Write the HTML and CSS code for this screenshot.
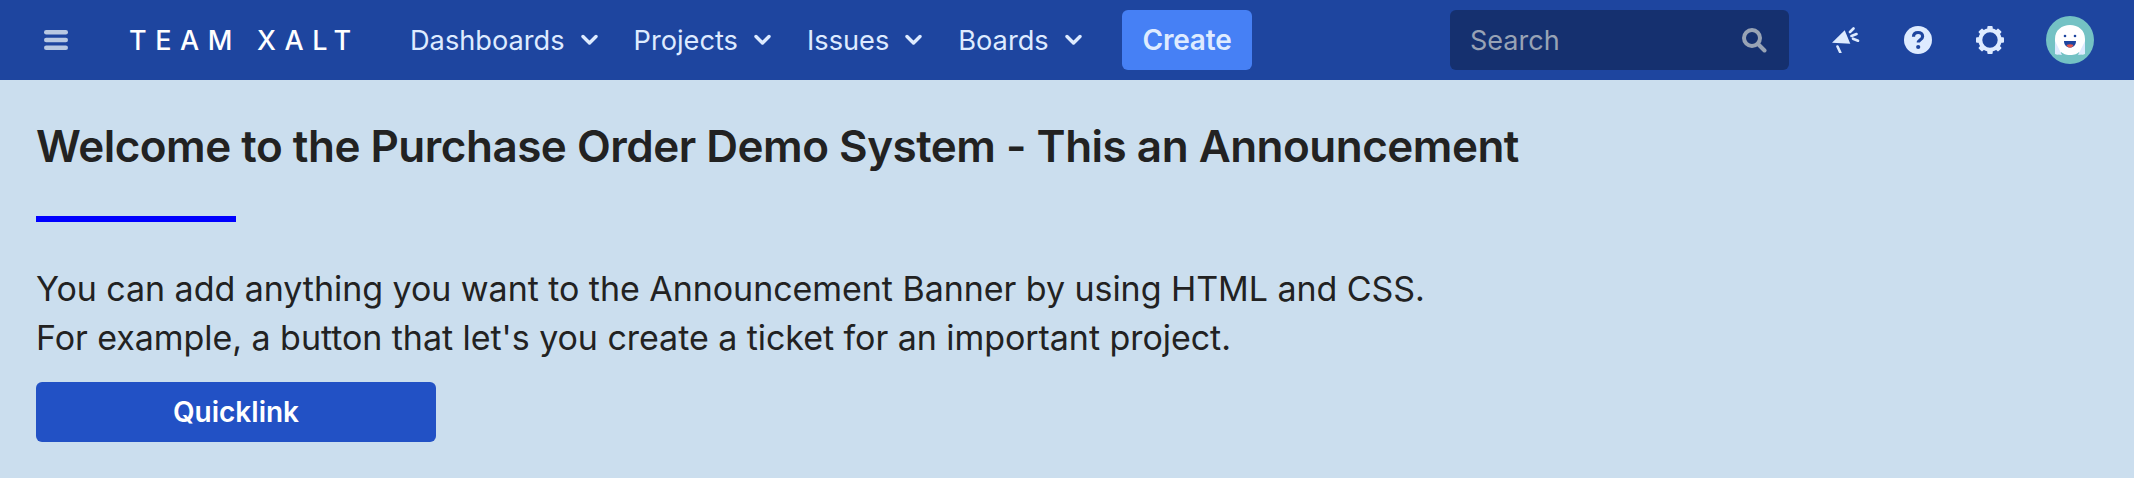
FILE: index.html
```html
<!DOCTYPE html>
<html lang="en">
<head>
<meta charset="utf-8">
<title>Team Xalt</title>
<link rel="stylesheet" href="styles.css">
</head>
<body>
<nav class="nav">
  <svg class="burger" width="24" height="20" viewBox="0 0 24 20"><g fill="#b9c9e2"><rect y="0" width="24" height="4.4" rx="2.2"/><rect y="7.8" width="24" height="4.4" rx="2.2"/><rect y="15.6" width="24" height="4.4" rx="2.2"/></g></svg>
  <span class="logo">TEAM XALT</span>
  <ul class="menu">
    <li class="menu-item"><span>Dashboards</span><svg class="chev" width="17" height="12" viewBox="0 0 17 12"><path d="M2 2.500l6.500 6.500L15 2.500" fill="none" stroke="#deebff" stroke-width="3.400" stroke-linecap="round" stroke-linejoin="round"/></svg></li>
    <li class="menu-item"><span>Projects</span><svg class="chev" width="17" height="12" viewBox="0 0 17 12"><path d="M2 2.500l6.500 6.500L15 2.500" fill="none" stroke="#deebff" stroke-width="3.400" stroke-linecap="round" stroke-linejoin="round"/></svg></li>
    <li class="menu-item"><span>Issues</span><svg class="chev" width="17" height="12" viewBox="0 0 17 12"><path d="M2 2.500l6.500 6.500L15 2.500" fill="none" stroke="#deebff" stroke-width="3.400" stroke-linecap="round" stroke-linejoin="round"/></svg></li>
    <li class="menu-item"><span>Boards</span><svg class="chev" width="17" height="12" viewBox="0 0 17 12"><path d="M2 2.500l6.500 6.500L15 2.500" fill="none" stroke="#deebff" stroke-width="3.400" stroke-linecap="round" stroke-linejoin="round"/></svg></li>
  </ul>
  <a class="create">Create</a>
  <div class="search">
    <span class="search-text">Search</span>
    <svg width="26" height="26" viewBox="0 0 26 26"><circle cx="11" cy="11" r="8" fill="none" stroke="#98a3b5" stroke-width="4"/><path d="M17 17l6.500 6.500" stroke="#98a3b5" stroke-width="4" stroke-linecap="round"/></svg>
  </div>
  <svg class="ic-mega" width="28" height="26" viewBox="0 0 28 26"><path d="M0 15.700L12.700 3.300l5.600 13.400z" fill="#deebff"/><g fill="none" stroke="#deebff" stroke-width="2.600" stroke-linecap="round"><path d="M5.500 19.500l2.800 6M18 5l3.500-3.500M19.500 9l5-2M21 11.700l5 2"/></g></svg>
  <svg class="ic-help" width="28" height="28" viewBox="0 0 28 28"><circle cx="14" cy="14" r="14" fill="#deebff"/><path d="M9.500 10.800c0-2.800 2-4.300 4.600-4.300s4.500 1.500 4.500 3.900c0 3.200-4.300 3.300-4.300 6.100" fill="none" stroke="#1e459f" stroke-width="3.200"/><circle cx="14.200" cy="21" r="2.100" fill="#1e459f"/></svg>
  <svg class="ic-gear" width="28" height="28" viewBox="0 0 28 28"><circle cx="14" cy="14" r="9.700" fill="none" stroke="#deebff" stroke-width="4"/><g fill="#deebff"><rect x="11.300" y="0" width="5.400" height="4.500" rx="1"/><rect x="11.300" y="0" width="5.400" height="4.500" rx="1" transform="rotate(45 14 14)"/><rect x="11.300" y="0" width="5.400" height="4.500" rx="1" transform="rotate(90 14 14)"/><rect x="11.300" y="0" width="5.400" height="4.500" rx="1" transform="rotate(135 14 14)"/><rect x="11.300" y="0" width="5.400" height="4.500" rx="1" transform="rotate(180 14 14)"/><rect x="11.300" y="0" width="5.400" height="4.500" rx="1" transform="rotate(225 14 14)"/><rect x="11.300" y="0" width="5.400" height="4.500" rx="1" transform="rotate(270 14 14)"/><rect x="11.300" y="0" width="5.400" height="4.500" rx="1" transform="rotate(315 14 14)"/></g></svg>
  <svg class="avatar" width="48" height="48" viewBox="0 0 48 48"><circle cx="24" cy="24" r="24" fill="#74c2c4"/><path d="M9 38V23C9 14 16 9 24 9s15 5 15 14v15c-3 1-5 0-6-2-2 2-4 3-9 3s-6-1-9-3c-1 2-3 3-6 2z" fill="#fff"/><path d="M9 25l7 14c-3 0-4-1-7-1zM39 25l-7 14c3 0 4-1 7-1z" fill="#deebff"/><circle cx="19" cy="20" r="1.300" fill="#1e459f"/><circle cx="29" cy="20" r="1.300" fill="#1e459f"/><path d="M18 25h12c0 4-2.500 6.500-6 6.500S18 29 18 25z" fill="#1e459f"/><path d="M20.500 29c2-1 5-1 7 0-1 2-2 2.500-3.500 2.500s-2.500-.5-3.500-2.500z" fill="#e5574d"/></svg>
</nav>
<main class="banner">
  <h1 class="title">Welcome to the Purchase Order Demo System - This an Announcement</h1>
  <div class="rule"></div>
  <p class="text">You can add anything you want to the Announcement Banner by using HTML and CSS.<br>For example, a button that let's you create a ticket for an important project.</p>
  <a class="quick">Quicklink</a>
</main>
</body>
</html>
```
FILE: styles.css
```css
* { box-sizing: border-box; }
html, body { margin: 0; padding: 0; }
body { background: #cbdeee; font-family: Inter, "Liberation Sans", sans-serif; color: #222; height: 478px; overflow: hidden; }
.nav { display: flex; align-items: center; height: 80px; background: #1e459f; padding-left: 44px; color: #deebff; }
.burger { flex: none; }
.logo { flex: none; width: 281px; margin-left: 61px; font-size: 27px; font-weight: 500; letter-spacing: 8.6px; color: #fff; white-space: nowrap; }
.menu { display: flex; list-style: none; margin: 0; padding: 0; flex: none; width: 712px; }
.menu-item { display: flex; align-items: center; font-size: 27.2px; gap: 16px; margin-right: 36px; }
.chev { flex: none; }
.create { flex: none; display: flex; align-items: center; justify-content: center; width: 130px; height: 60px; background: #4680f5; border-radius: 6px; font-size: 28px; font-weight: 600; letter-spacing: -0.2px; color: #deebff; }
.search { flex: none; display: flex; align-items: center; justify-content: space-between; width: 339px; height: 60px; margin-left: 198px; padding: 0 22px 0 20px; background: #15306f; border-radius: 6px; font-size: 27px; color: #98a3b5; }
.ic-mega { flex: none; margin-left: 43px; }
.ic-help { flex: none; margin-left: 44px; }
.ic-gear { flex: none; margin-left: 44px; }
.avatar { flex: none; margin-left: 42px; }
.banner { padding: 0 36px; }
.title { margin: 0; padding-top: 40px; font-size: 44px; line-height: 52px; font-weight: 600; letter-spacing: -0.5px; color: #222; }
.rule { width: 200px; height: 6px; background: #0000ff; margin-top: 44px; }
.text { margin: 42px 0 0; font-size: 34px; line-height: 49px; letter-spacing: -0.05px; color: #222; }
.quick { display: flex; align-items: center; justify-content: center; width: 400px; height: 60px; margin-top: 20px; background: #2251c5; border-radius: 6px; font-size: 28px; font-weight: 600; color: #fff; }
```
